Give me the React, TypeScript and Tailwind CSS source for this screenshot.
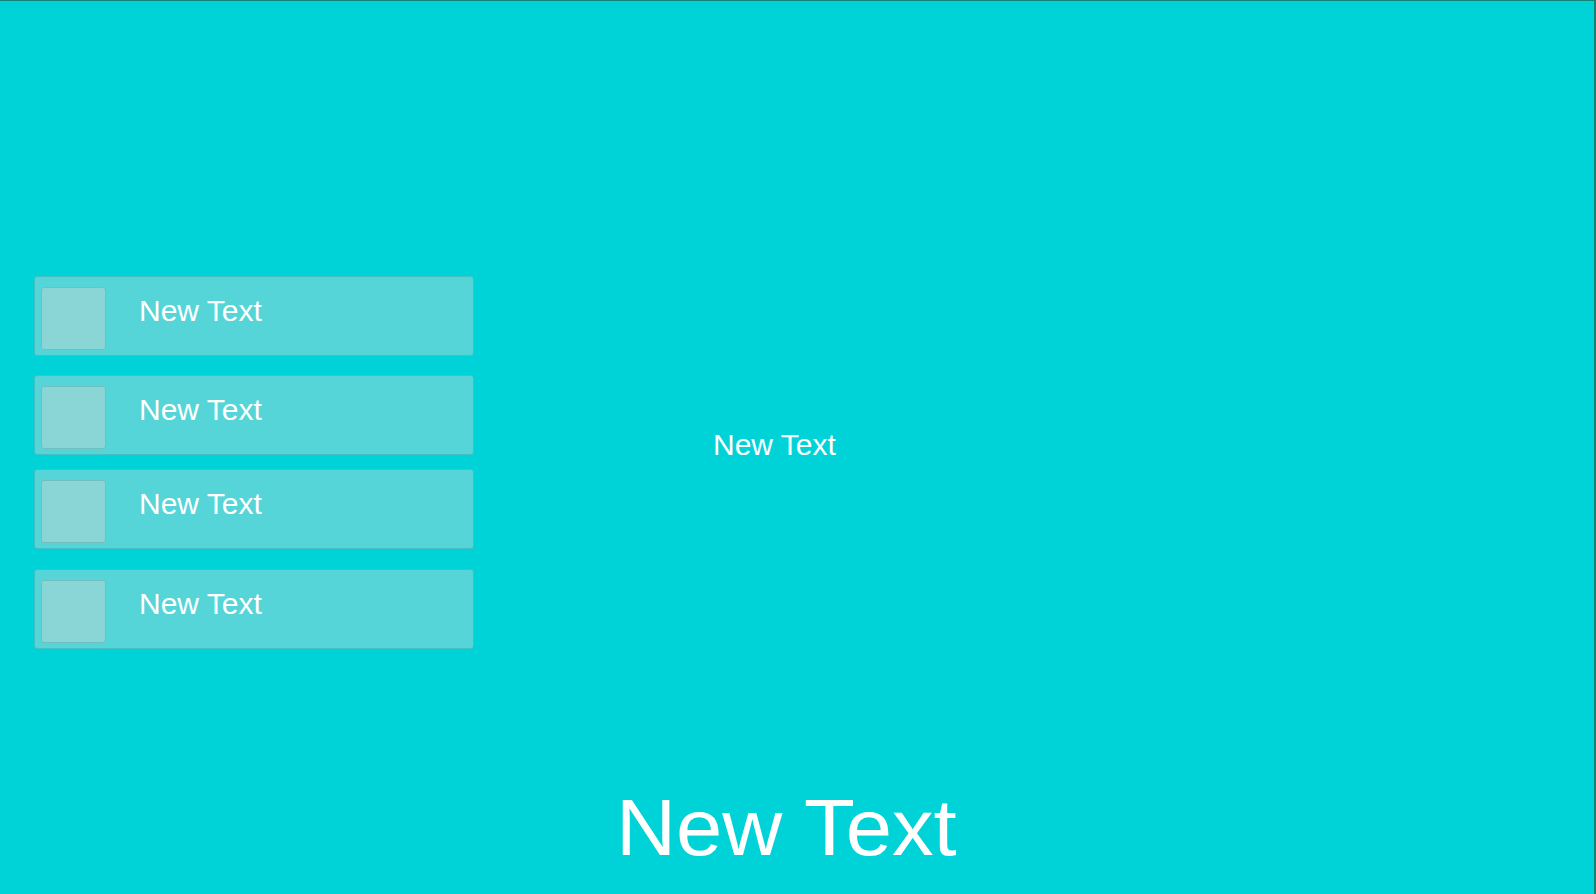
import React from "react";

const rows = [
  { id: 1, mt: "mt-0" },
  { id: 2, mt: "mt-[19px]" },
  { id: 3, mt: "mt-[14px]" },
  { id: 4, mt: "mt-[20px]" },
];

const Row: React.FC<{ mt: string }> = ({ mt }) => (
  <div
    className={`${mt} flex h-[80px] w-[440px] items-start rounded-[3px] border border-[#44bfc2] bg-[#55d5d8] pl-[6px] pt-[10px]`}
  >
    <div className="h-[63px] w-[65px] shrink-0 rounded-[3px] border border-[#72bfc0] bg-[#8ad5d6]" />
    <span className="ml-[33px] mt-[9px] text-[30px] leading-[30px] text-white">New Text</span>
  </div>
);

export default function App() {
  return (
    <div
      className="flex h-[894px] w-[1596px] flex-col overflow-hidden border-t border-r-2 border-[#118477] bg-[#00d3d8] text-white"
      style={{ fontFamily: '"Liberation Sans", Arial, sans-serif' }}
    >
      <div className="flex items-start pt-[275px]">
        <div className="ml-[34px] flex flex-col">
          {rows.map((r) => (
            <Row key={r.id} mt={r.mt} />
          ))}
        </div>
        <span className="ml-[239px] mt-[154px] text-[30px] leading-[30px]">New Text</span>
      </div>
      <div className="mt-[139px] flex">
        <span className="ml-[616px] origin-left scale-x-[1.04] text-[80px] leading-[80px]">New Text</span>
      </div>
    </div>
  );
}
